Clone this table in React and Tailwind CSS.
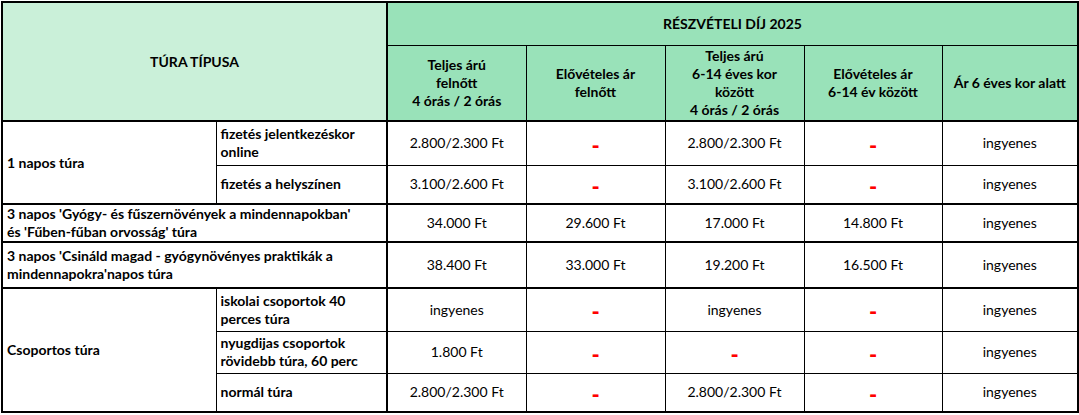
import React from "react";

const rows = [
  { type: "1 napos túra", span: 2, sub: "fizetés jelentkezéskor online", h: "h-[44px]", vals: ["2.800/2.300 Ft", "-", "2.800/2.300 Ft", "-", "ingyenes"] },
  { sub: "fizetés a helyszínen", h: "h-[39px]", end: true, vals: ["3.100/2.600 Ft", "-", "3.100/2.600 Ft", "-", "ingyenes"] },
  { type: "3 napos 'Gyógy- és fűszernövények a mindennapokban'\nés 'Fűben-fűban orvosság' túra", wide: true, h: "h-[38px]", end: true, vals: ["34.000 Ft", "29.600 Ft", "17.000 Ft", "14.800 Ft", "ingyenes"] },
  { type: "3 napos 'Csináld magad - gyógynövényes praktikák a\nmindennapokra'napos túra", wide: true, h: "h-[46px]", end: true, vals: ["38.400 Ft", "33.000 Ft", "19.200 Ft", "16.500 Ft", "ingyenes"] },
  { type: "Csoportos túra", span: 3, sub: "iskolai csoportok 40 perces túra", h: "h-[43px]", vals: ["ingyenes", "-", "ingyenes", "-", "ingyenes"] },
  { sub: "nyugdijas csoportok rövidebb túra, 60 perc", h: "h-[42px]", vals: ["1.800 Ft", "-", "-", "-", "ingyenes"] },
  { sub: "normál túra", h: "h-[39px]", vals: ["2.800/2.300 Ft", "-", "2.800/2.300 Ft", "-", "ingyenes"] },
];

function Val({ v }) {
  if (v === "-") {
    return (
      <span className="inline-block translate-y-[3px] text-[22px] font-black leading-none text-[#ff0000]">-</span>
    );
  }
  return v;
}

export default function App() {
  return (
    <div className="bg-white pl-px pt-px" style={{ fontFamily: "Lato, 'Noto Sans', sans-serif" }}>
      <table className="w-[1076px] table-fixed border-collapse border-2 border-black text-[14px] leading-[18px] text-black">
        <colgroup>
          <col className="w-[214px]" />
          <col className="w-[171px]" />
          <col className="w-[139px]" />
          <col className="w-[139px]" />
          <col className="w-[139px]" />
          <col className="w-[138px]" />
          <col className="w-[136px]" />
        </colgroup>
        <thead>
          <tr className="h-[43px]">
            <th colSpan={2} rowSpan={2} className="border-b-2 border-r-2 border-black bg-[#caf0d9] font-bold">TÚRA TÍPUSA</th>
            <th colSpan={5} className="border border-black bg-[#99e2b9] font-bold">RÉSZVÉTELI DÍJ 2025</th>
          </tr>
          <tr className="h-[76px] bg-[#99e2b9] font-bold">
            <th className="border border-b-2 border-black font-bold">Teljes árú<br />felnőtt<br />4 órás / 2 órás</th>
            <th className="border border-b-2 border-black font-bold">Elővételes ár<br />felnőtt</th>
            <th className="border border-b-2 border-black font-bold">Teljes árú<br />6-14 éves kor<br />között<br />4 órás / 2 órás</th>
            <th className="border border-b-2 border-black font-bold">Elővételes ár<br />6-14 év között</th>
            <th className="border border-b-2 border-black font-bold">Ár 6 éves kor alatt</th>
          </tr>
        </thead>
        <tbody>
          {rows.map((r, i) => (
            <tr key={i} className={r.h}>
              {r.type && (
                <td
                  colSpan={r.wide ? 2 : 1}
                  rowSpan={r.span || 1}
                  className={`whitespace-pre-line border border-black px-[4px] font-bold ${r.wide ? "border-r-2" : ""} ${r.end || r.span ? "border-b-2" : ""}`}
                >
                  {r.type}
                </td>
              )}
              {!r.wide && (
                <td className={`border border-r-2 border-black px-[4px] font-bold ${r.end ? "border-b-2" : ""}`}>{r.sub}</td>
              )}
              {r.vals.map((v, j) => (
                <td key={j} className={`border border-black text-center ${r.end ? "border-b-2" : ""}`}>
                  <Val v={v} />
                </td>
              ))}
            </tr>
          ))}
        </tbody>
      </table>
    </div>
  );
}
